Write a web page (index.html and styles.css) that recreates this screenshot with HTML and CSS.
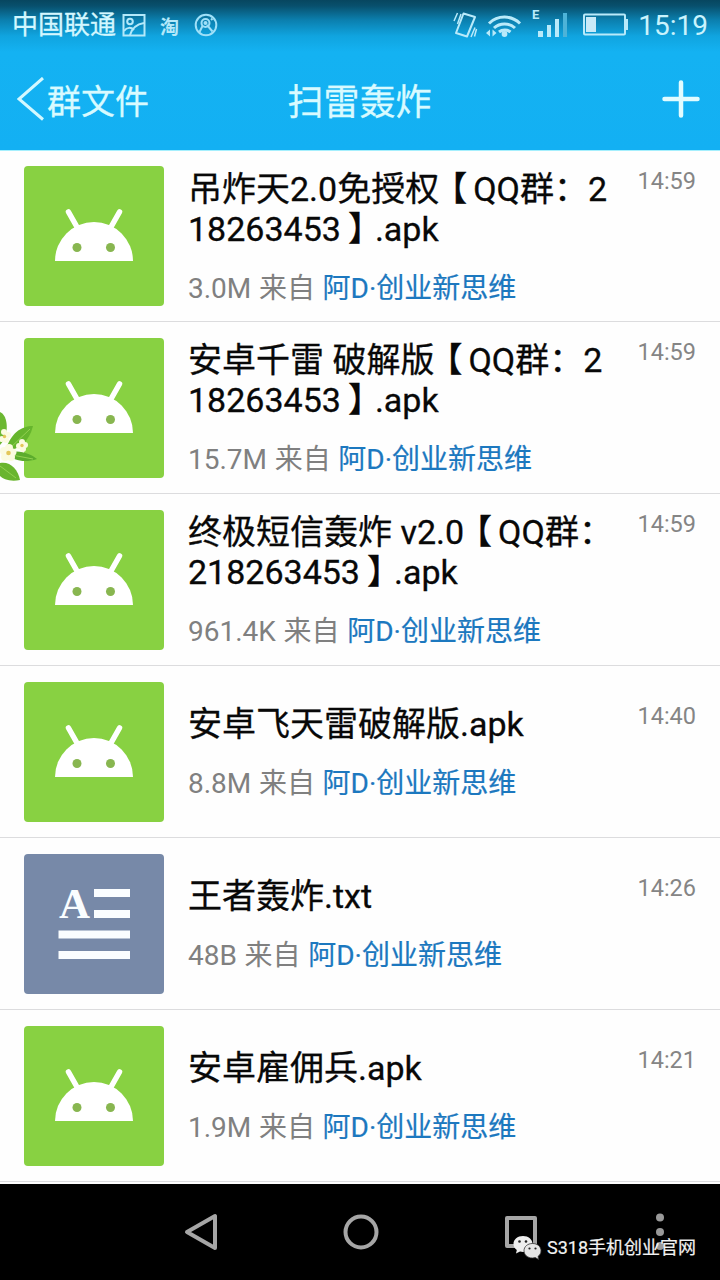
FILE: index.html
```
<!DOCTYPE html>
<html lang="zh-CN">
	<head>
		<meta charset="UTF-8">
		<title>群文件</title>
		<link rel="stylesheet" href="styles.css">
	</head>
	<body>
		<svg class="defs" width="0" height="0">
			<symbol id="android" viewBox="0 0 140 140">
				<path d="M31 95a39 39 0 0 1 78 0z" fill="#fff"/>
				<path d="M44.500 46L53 61M95.500 46L87 61" stroke="#fff" stroke-width="5.500" stroke-linecap="round"/>
				<circle cx="53" cy="81.500" r="4.500" fill="#88b650"/>
				<circle cx="86.500" cy="81.500" r="4.500" fill="#88b650"/>
			</symbol>
		</svg>
		<div class="phone">
			<header class="top">
				<div class="status">
					<span class="carrier">中国联通</span>
					<svg class="ico-pic" width="24" height="24" fill="none" stroke="#b4e9fa" stroke-width="2">
						<rect x="1.500" y="2" width="21" height="20.500"/>
						<circle cx="8" cy="8.500" r="2.800"/>
						<path d="M2 18C5 14 9 14 12 17M8 22C10 15 16 11 22 10"/>
					</svg>
					<span class="tao">淘</span>
					<svg class="ico-key" width="24" height="24" fill="none" stroke="#9fe0f8" stroke-width="2">
						<circle cx="12" cy="12" r="10.300"/>
						<circle cx="11.500" cy="10" r="4"/>
						<circle cx="11.500" cy="10" r="1"/>
						<path d="M13 12L18.500 18.500M8.500 13L5.500 19M17 5.500l1.500 1.500"/>
					</svg>
					<div class="status-right">
						<svg width="116" height="34" viewBox="453 8 116 34" fill="none" stroke="#b9eafa" stroke-width="2">
							<path d="M463.500 13.500L475 17L467 36.500L456 33z" stroke-linejoin="round"/>
							<path d="M454 21L457.500 13M457.500 24L461 14M471 37L475 27.500M474.500 36.500L476.500 29" stroke-width="1.500"/>
							<path d="M489 23.500a22 22 0 0 1 31 0M494 28a15.500 15.500 0 0 1 21 0M499 32a9 9 0 0 1 11.500 0" stroke-width="3"/>
							<circle cx="504.500" cy="34" r="2.900" fill="#b9eafa" stroke="none"/>
							<path d="M490 29.500v7l-4-3.500zM492.500 29.500v7l4-3.500z" fill="#b9eafa" stroke="none"/>
							<path d="M538 31h5v6h-5zM547 25h4v12h-4zM555 19h4v18h-4z" fill="#b9eafa" stroke="none"/>
							<path d="M563 13h4v24h-4z" fill="#4db3d8" stroke="none"/>
							<text class="net" x="532" y="19">E</text>
						</svg>
						<svg class="battery" width="46" height="24">
							<rect x="1" y="1.500" width="41" height="20" rx="1" fill="none" stroke="#b9eafa" stroke-width="2"/>
							<path d="M3 4h10v15H3z" fill="#c9eaf8"/>
							<path d="M43 6h2v11h-2z" fill="#b9eafa"/>
						</svg>
						<span class="clock">15:19</span>
					</div>
				</div>
				<div class="nav">
					<a class="back">
						<svg width="28" height="44" fill="none" stroke="#d3f8ff" stroke-width="3"><path d="M26 1L2 22L26 42.500"/></svg>
						<span>群文件</span>
					</a>
					<h1>扫雷轰炸</h1>
					<a class="add">
						<svg width="38" height="38"><path d="M19 2.500v33M2.500 19h33" stroke="#e2fcff" stroke-width="4.500" stroke-linecap="round"/></svg>
					</a>
				</div>
			</header>

			<ul class="list">
				<li>
					<svg class="thumb apk"><use href="#android"/></svg>
					<div class="info">
						<h2>吊炸天2.0免授权<i class="l">【</i>QQ群：2<br>18263453<i class="r">】</i>.apk</h2>
						<p>3.0M 来自 <a>阿D·创业新思维</a></p>
					</div>
					<time>14:59</time>
				</li>
				<li>
					<svg class="thumb apk"><use href="#android"/></svg>
					<div class="info">
						<h2>安卓千雷 破解版<i class="l">【</i>QQ群：2<br>18263453<i class="r">】</i>.apk</h2>
						<p>15.7M 来自 <a>阿D·创业新思维</a></p>
					</div>
					<time>14:59</time>
					<!-- 左侧花朵挂件 -->
					<svg class="flower" width="40" height="76">
						<path d="M0 1C7 4 9 18 4 29L0 34z" fill="#6cb832"/>
						<path d="M5 40C11 22 21 15 33 15C29 31 19 39 5 40z" fill="#66b52d"/>
						<path d="M7 43C17 37 31 43 37 48C25 52 14 50 7 43z" fill="#5cac2d"/>
						<path d="M0 52C10 50 18 58 20 69C10 71 3 68 0 65z" fill="#69b52e"/>
						<path d="M8 39L30 18M12 44L33 48M0 55L16 67" stroke="#93d151" fill="none"/>
						<g fill="#fbfbe0">
							<circle cx="4" cy="21" r="3"/><circle cx="8" cy="24" r="3"/><circle cx="6" cy="29" r="3"/><circle cx="2" cy="28" r="3"/>
							<circle cx="22" cy="31" r="3"/><circle cx="25" cy="34" r="3"/><circle cx="23" cy="38" r="3"/><circle cx="19" cy="35" r="3"/>
							<circle cx="9" cy="37" r="4"/><circle cx="13" cy="41" r="3.500"/><circle cx="11" cy="46" r="4"/><circle cx="5" cy="46" r="4"/><circle cx="4" cy="40" r="4"/>
						</g>
						<g fill="#e4c75a"><circle cx="4.500" cy="25.500" r="1.700"/><circle cx="22" cy="34.500" r="1.700"/><circle cx="8.500" cy="42" r="2.300"/></g>
					</svg>
				</li>
				<li>
					<svg class="thumb apk"><use href="#android"/></svg>
					<div class="info">
						<h2>终极短信轰炸 v2.0<i class="l">【</i>QQ群：<br>218263453<i class="r">】</i>.apk</h2>
						<p>961.4K 来自 <a>阿D·创业新思维</a></p>
					</div>
					<time>14:59</time>
				</li>
				<li class="single">
					<svg class="thumb apk"><use href="#android"/></svg>
					<div class="info">
						<h2>安卓飞天雷破解版.apk</h2>
						<p>8.8M 来自 <a>阿D·创业新思维</a></p>
					</div>
					<time>14:40</time>
				</li>
				<li class="single">
					<svg class="thumb txt" viewBox="0 0 140 140">
						<text class="letter" x="35" y="64">A</text>
						<path d="M70 35h36v8H70zM70 56h36v8H70zM34.500 76.500h71.500v8H34.500zM34.500 97h71.500v8H34.500z" fill="#fafdff"/>
					</svg>
					<div class="info">
						<h2>王者轰炸.txt</h2>
						<p>48B 来自 <a>阿D·创业新思维</a></p>
					</div>
					<time>14:26</time>
				</li>
				<li class="single">
					<svg class="thumb apk"><use href="#android"/></svg>
					<div class="info">
						<h2>安卓雇佣兵.apk</h2>
						<p>1.9M 来自 <a>阿D·创业新思维</a></p>
					</div>
					<time>14:21</time>
				</li>
			</ul>

			<footer class="keys">
				<svg width="720" height="96" fill="none" stroke="#a6a6a6" stroke-width="4" stroke-linejoin="round">
					<path d="M215 32v32L187 48z"/>
					<circle cx="361" cy="48" r="15.500"/>
					<rect x="507" y="34" width="28" height="28"/>
					<g fill="#999" stroke="none"><circle cx="660" cy="33.500" r="4"/><circle cx="660" cy="48" r="4"/><circle cx="660" cy="62" r="4"/></g>
				</svg>
				<div class="mark">
					<svg width="30" height="26">
						<path d="M10 1C4.500 1 .5 4.500 .5 9c0 2.500 1.300 4.700 3.300 6L3 18.500l4-2c1 .3 2 .4 3 .4C15.500 17 19.500 13.500 19.500 9S15.500 1 10 1z" fill="#eee"/>
						<path d="M19.500 8.500c-5 0-8.500 3.200-8.500 7.200s3.500 7.300 8.500 7.300c1 0 2-.1 2.800-.4l3.500 2-.8-3.200c2-1.400 3-3.400 3-5.700 0-4-3.500-7.200-8.500-7.200z" fill="#e6e6e6" stroke="#333" stroke-width=".8"/>
						<g fill="#222"><circle cx="6.500" cy="6.500" r="1.300"/><circle cx="13" cy="6.500" r="1.300"/><circle cx="16.500" cy="13.500" r="1.100"/><circle cx="22.500" cy="13.500" r="1.100"/></g>
					</svg>
					<span>S318手机创业官网</span>
				</div>
			</footer>
		</div>
	</body>
</html>
```
FILE: styles.css
```
*{
	padding: 0;
	margin: 0;
	box-sizing: border-box;
}
body{
	font-family: Roboto, "Noto Sans CJK SC", sans-serif;
	background-color: #fefefe;
}
.defs{
	position: absolute;
}
.phone{
	width: 720px;
	height: 1280px;
	display: flex;
	flex-direction: column;
	overflow: hidden;
}
/*顶部*/
.top{
	height: 151px;
	background: linear-gradient(#07465f 0, #08506d 6px, #0b7fae 20px, #10a4df 36px, #14b2f2 52px, #13b0f3 100%);
	border-bottom: 1px solid #a5effd;
}
.status{
	height: 50px;
	padding: 0 12px;
	display: flex;
	align-items: center;
	color: #c9f3fd;
}
.carrier{
	font-size: 26px;
	line-height: 50px;
	color: #d3f7ff;
	-webkit-text-stroke: .3px;
}
.ico-pic{
	margin-left: 6px;
}
.tao{
	margin-left: 14px;
	font-size: 19px;
	font-weight: bold;
	color: #b4e9fa;
}
.ico-key{
	margin-left: 15px;
}
.status-right{
	margin-left: auto;
	display: flex;
	align-items: center;
}
.net{
	font-size: 13px;
	font-weight: bold;
	fill: #b9eafa;
	stroke: none;
}
.battery{
	margin-left: 14px;
}
.clock{
	margin-left: 9px;
	font-size: 28px;
	line-height: 52px;
	padding-top: 2px;
}
.nav{
	height: 98px;
	padding: 0 20px 0 17px;
	display: grid;
	grid-template-columns: 1fr auto 1fr;
	align-items: center;
	color: #d8faff;
	-webkit-text-stroke: .3px;
}
.back{
	display: flex;
	align-items: center;
	gap: 2px;
	font-size: 34px;
}
.nav h1{
	padding-left: 2px;
	font-size: 36px;
	font-weight: normal;
}
.add{
	justify-self: end;
	height: 38px;
}
/*文件列表*/
.list{
	list-style: none;
	flex: 1;
}
.list li{
	position: relative;
	height: 172px;
	padding: 0 24px;
	display: flex;
	align-items: center;
	border-bottom: 1px solid #dcdcde;
}
.list li:first-child{
	height: 171px;
}
.thumb{
	width: 140px;
	height: 140px;
	border-radius: 4px;
	flex: none;
}
.apk{
	background-color: #88d142;
}
.txt{
	background-color: #7789a8;
}
.letter{
	font: bold 43px "Liberation Serif", serif;
	fill: #fafdff;
}
.info{
	margin-left: 24px;
	padding-top: 3px;
	flex: 1;
	white-space: nowrap;
}
.info h2{
	font-size: 34px;
	font-weight: normal;
	line-height: 40px;
	color: #080808;
	-webkit-text-stroke: .3px;
}
/*括号用半宽字形,两边留空*/
.info i{
	font-style: normal;
	font-feature-settings: "halt";
}
.info .l{
	padding: 0 6px 0 11px;
}
.info .r{
	padding: 0 10px 0 7px;
}
.info p{
	margin-top: 22px;
	font-size: 28px;
	line-height: 36px;
	word-spacing: .7px;
	color: #808080;
}
.info a{
	color: #1c78bf;
	-webkit-text-stroke: .2px;
}
.list time{
	align-self: flex-start;
	margin-top: 15px;
	font-size: 23.500px;
	line-height: 30px;
	color: #858585;
}
.single time{
	margin-top: 35px;
}
.flower{
	position: absolute;
	left: 0;
	top: 89px;
}
/*底部按键*/
.keys{
	position: relative;
	height: 96px;
	background-color: #000;
}
.mark{
	position: absolute;
	left: 513px;
	top: 51px;
	display: flex;
	align-items: center;
	gap: 4px;
	font-size: 18px;
	line-height: 26px;
	color: #f2f2f2;
	white-space: nowrap;
	-webkit-text-stroke: .2px;
}
```
